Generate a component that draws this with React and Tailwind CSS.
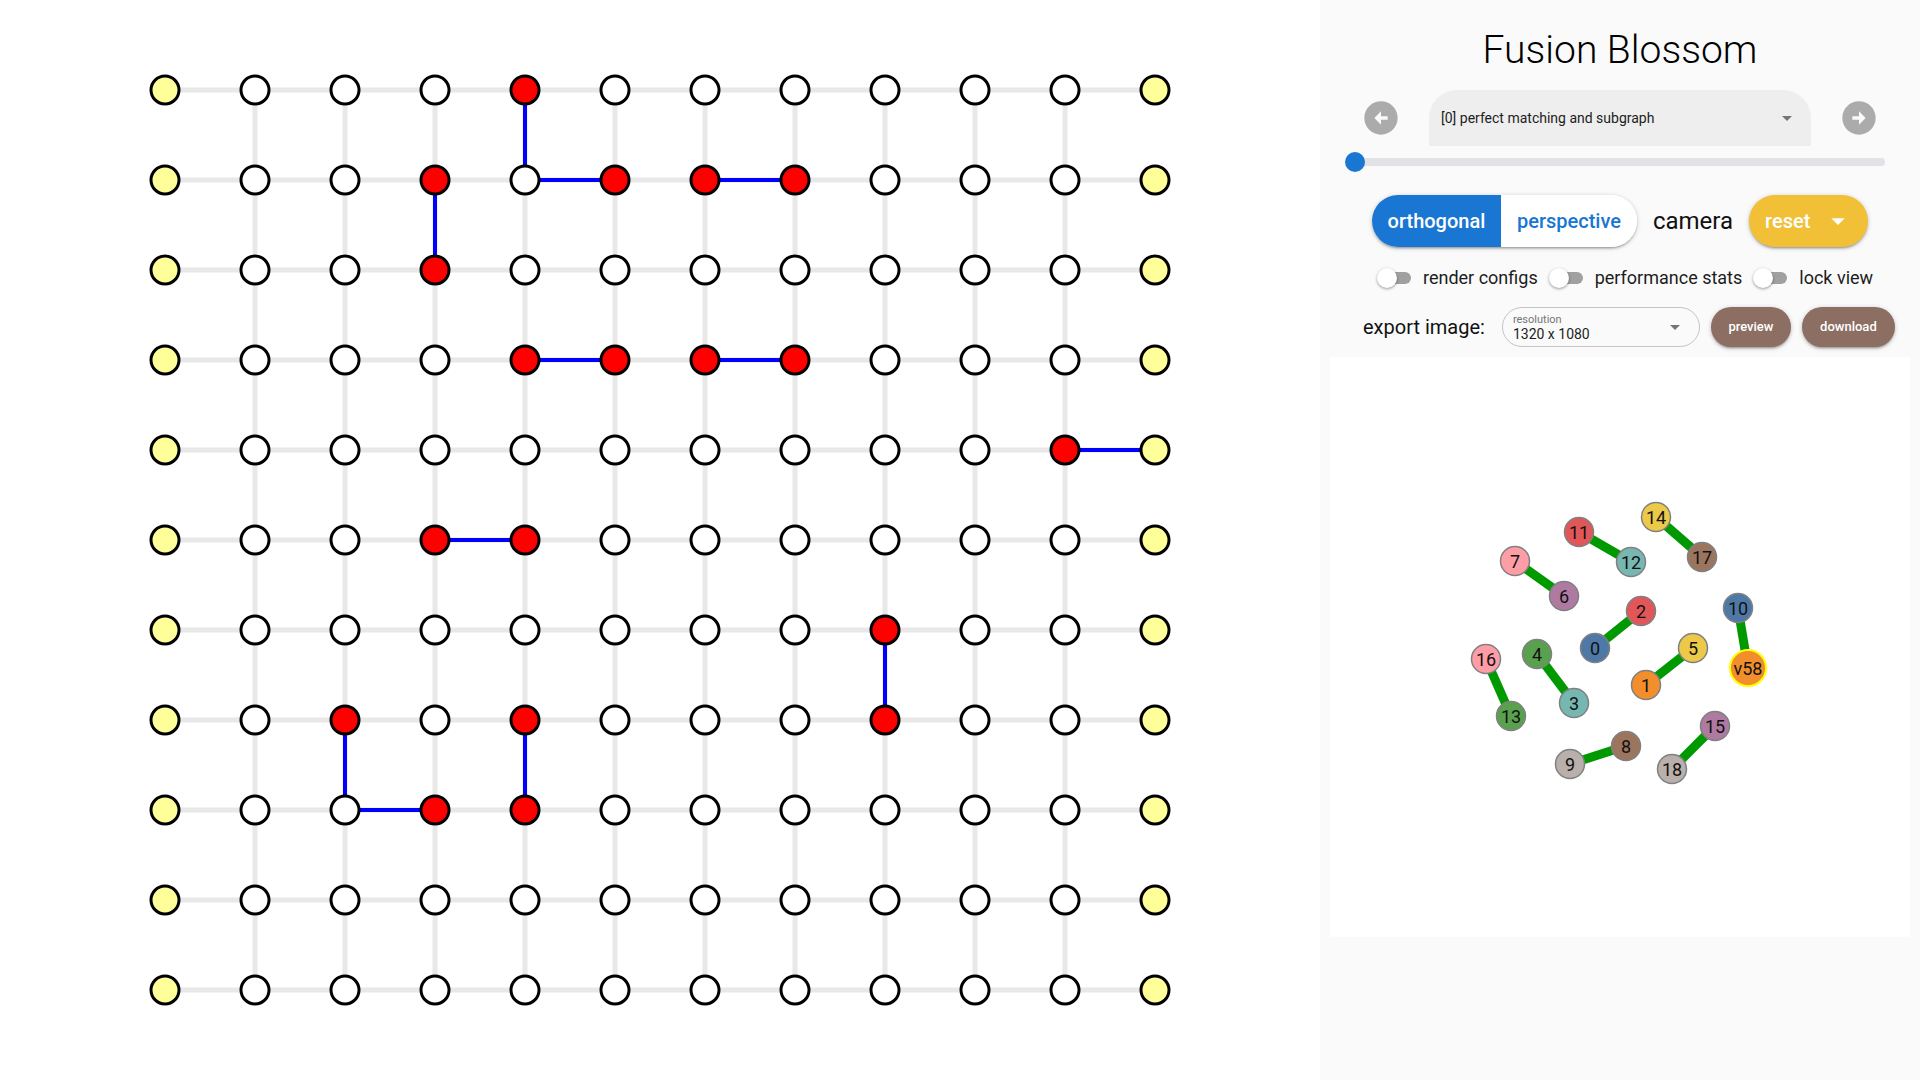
import { useState } from 'react';

const COLS = 12;
const ROWS = 11;
const gx = (i) => 165 + 90 * i;
const gy = (j) => 90 + 90 * j;

const RED = new Set([
  '4,0', '3,1', '5,1', '6,1', '7,1', '3,2', '4,3', '5,3', '6,3', '7,3',
  '10,4', '3,5', '4,5', '8,6', '2,7', '4,7', '8,7', '3,8', '4,8',
]);

const MATCHED = [
  [4, 0, 4, 1], [4, 1, 5, 1], [6, 1, 7, 1], [3, 1, 3, 2], [4, 3, 5, 3],
  [6, 3, 7, 3], [10, 4, 11, 4], [3, 5, 4, 5], [8, 6, 8, 7], [2, 7, 2, 8],
  [2, 8, 3, 8], [4, 7, 4, 8],
];

// subgraph view, coords inside the 580x580 canvas
const NODES = {
  14: [326, 160, '#edc949'],
  11: [249, 175, '#e15759'],
  17: [372, 200, '#9c755f'],
  12: [301, 205, '#76b7b2'],
  7: [185, 204, '#ff9da7'],
  6: [234, 239, '#af7aa1'],
  2: [311, 254, '#e15759'],
  10: [408, 251, '#4e79a7'],
  0: [265, 291, '#4e79a7'],
  5: [363, 291, '#edc949'],
  16: [156, 302, '#ff9da7'],
  4: [207, 297, '#59a14f'],
  v58: [418, 311, '#f28e2c'],
  1: [316, 328, '#f28e2c'],
  3: [244, 346, '#76b7b2'],
  13: [181, 359, '#59a14f'],
  15: [385, 369, '#af7aa1'],
  8: [296, 389, '#9c755f'],
  9: [240, 407, '#bab0ab'],
  18: [342, 412, '#bab0ab'],
};

const PAIRS = [
  ['14', '17'], ['11', '12'], ['7', '6'], ['2', '0'], ['10', 'v58'],
  ['5', '1'], ['16', '13'], ['4', '3'], ['8', '9'], ['15', '18'],
];

const btnShadow =
  'shadow-[0_1px_5px_rgba(0,0,0,0.2),0_2px_2px_rgba(0,0,0,0.14),0_3px_1px_-2px_rgba(0,0,0,0.12)]';

function DecodingGraph() {
  const grayLines = [];
  for (let j = 0; j < ROWS; j++) {
    grayLines.push(<line key={`h${j}`} x1={gx(0)} y1={gy(j)} x2={gx(COLS - 1)} y2={gy(j)} />);
  }
  for (let i = 1; i < COLS - 1; i++) {
    grayLines.push(<line key={`v${i}`} x1={gx(i)} y1={gy(0)} x2={gx(i)} y2={gy(ROWS - 1)} />);
  }

  const nodes = [];
  for (let j = 0; j < ROWS; j++) {
    for (let i = 0; i < COLS; i++) {
      const virtual = i === 0 || i === COLS - 1;
      const fill = virtual ? '#ffff99' : RED.has(`${i},${j}`) ? '#ff0000' : '#ffffff';
      nodes.push(<circle key={`${i}-${j}`} cx={gx(i)} cy={gy(j)} r="14" fill={fill} />);
    }
  }

  return (
    <svg width="1320" height="1080" viewBox="0 0 1320 1080">
      <g stroke="#e8e8e8" strokeWidth="5">{grayLines}</g>
      <g stroke="#0000ff" strokeWidth="4">
        {MATCHED.map(([a, b, c, d], k) => (
          <line key={k} x1={gx(a)} y1={gy(b)} x2={gx(c)} y2={gy(d)} />
        ))}
      </g>
      <g stroke="#000" strokeWidth="3">{nodes}</g>
    </svg>
  );
}

function Subgraph() {
  return (
    <svg width="580" height="580" viewBox="0 0 580 580">
      <g stroke="#009900" strokeWidth="9">
        {PAIRS.map(([a, b]) => (
          <line key={a + b} x1={NODES[a][0]} y1={NODES[a][1]} x2={NODES[b][0]} y2={NODES[b][1]} />
        ))}
      </g>
      {Object.entries(NODES).map(([id, [x, y, c]]) => {
        const big = id === 'v58';
        return (
          <g key={id}>
            <circle
              cx={x}
              cy={y}
              r={big ? 18 : 14.5}
              fill={c}
              stroke={big ? '#ffff00' : '#808080'}
              strokeWidth={big ? 2 : 1.5}
            />
            <text
              x={x}
              y={y + 6.5}
              textAnchor="middle"
              fontSize="18"
              fontFamily="Roboto, sans-serif"
              fill="#111"
            >
              {id}
            </text>
          </g>
        );
      })}
    </svg>
  );
}

function CircleArrow({ dir }) {
  const d =
    dir === 'left'
      ? 'M2 12c0 5.52 4.48 10 10 10s10-4.48 10-10S17.52 2 12 2 2 6.48 2 12zm10-1h4v2h-4v3l-4-4 4-4v3z'
      : 'M22 12c0-5.52-4.48-10-10-10S2 6.48 2 12s4.48 10 10 10 10-4.48 10-10zm-10 1H8v-2h4V8l4 4-4 4v-3z';
  return (
    <button className="w-10 h-10 flex items-center justify-center">
      <svg width="40" height="40" viewBox="0 0 24 24" fill="#ababab">
        <path d={d} />
      </svg>
    </button>
  );
}

function DropArrow({ size = 24, color = '#757575' }) {
  return (
    <svg width={size} height={size} viewBox="0 0 24 24" fill={color}>
      <path d="M7 10l5 5 5-5z" />
    </svg>
  );
}

function Toggle({ label }) {
  const [on, setOn] = useState(false);
  return (
    <button onClick={() => setOn(!on)} className="flex items-center gap-[12px]">
      <span className="relative w-[34px] h-[20px]">
        <span className="absolute left-[3px] right-0 top-[4px] h-[12px] rounded-full bg-[#a0a0a0]" />
        <span
          className={
            'absolute top-0 w-5 h-5 rounded-full bg-white shadow-[0_1px_3px_rgba(0,0,0,0.4)] ' +
            (on ? 'left-[14px]' : 'left-0')
          }
        />
      </span>
      <span className="text-[18px] text-[#1d1d1d] leading-none">{label}</span>
    </button>
  );
}

export default function App() {
  const [mode, setMode] = useState('orthogonal');

  return (
    <div className="flex w-[1920px] h-[1080px] font-['Roboto',sans-serif] overflow-hidden">
      <div className="w-[1320px] h-[1080px] bg-white shrink-0">
        <DecodingGraph />
      </div>

      <div className="w-[600px] h-[1080px] bg-[#fafafa] flex flex-col">
        <h1 className="pt-[31px] h-[69px] text-center text-[39px] leading-[39px] font-light text-black">
          Fusion Blossom
        </h1>

        <div className="mt-[21px] h-[56px] flex items-center justify-center gap-[28px]">
          <CircleArrow dir="left" />
          <div className="w-[382px] h-[56px] rounded-t-[28px] bg-[#eeeeee] flex items-center pl-[12px] pr-[12px]">
            <span className="flex-1 text-[14px] text-[#1d1d1d]">[0] perfect matching and subgraph</span>
            <DropArrow />
          </div>
          <CircleArrow dir="right" />
        </div>

        <div className="relative mt-[6px] h-[20px] mx-[35px]">
          <div className="absolute inset-x-0 top-[6px] h-[8px] rounded-full bg-[#e2e1e6]" />
          <div className="absolute left-[-10px] top-0 w-5 h-5 rounded-full bg-[#1976d2]" />
        </div>

        <div className="mt-[23px] h-[52px] flex items-center justify-center gap-[16px]">
          <div className={`flex h-[52px] rounded-full overflow-hidden bg-white ${btnShadow}`}>
            <button
              onClick={() => setMode('orthogonal')}
              className={
                'w-[129px] text-[20px] font-medium ' +
                (mode === 'orthogonal' ? 'bg-[#1976d2] text-white' : 'bg-white text-[#1976d2]')
              }
            >
              orthogonal
            </button>
            <button
              onClick={() => setMode('perspective')}
              className={
                'w-[136px] text-[20px] font-medium ' +
                (mode === 'perspective' ? 'bg-[#1976d2] text-white' : 'bg-white text-[#1976d2]')
              }
            >
              perspective
            </button>
          </div>
          <span className="text-[24px] text-[#111]">camera</span>
          <button
            className={`w-[119px] h-[52px] rounded-full bg-[#f2c037] text-white text-[20px] font-medium flex items-center pl-[16px] gap-[12px] ${btnShadow}`}
          >
            reset
            <DropArrow size={32} color="#ffffff" />
          </button>
        </div>

        <div className="mt-[21px] h-[20px] flex items-center pl-[57px] gap-[11px]">
          <Toggle label="render configs" />
          <Toggle label="performance stats" />
          <Toggle label="lock view" />
        </div>

        <div className="mt-[19px] h-[40px] flex items-center pl-[43px]">
          <span className="text-[20px] text-[#111] mr-[17px]">export image:</span>
          <div className="w-[198px] h-[40px] rounded-full border border-[#c4c4c4] flex items-center pl-[10px] pr-[12px]">
            <div className="flex-1 flex flex-col leading-none">
              <span className="text-[11px] text-[#757575]">resolution</span>
              <span className="text-[14px] text-[#1d1d1d] mt-[2px]">1320 x 1080</span>
            </div>
            <DropArrow />
          </div>
          <button
            className={`ml-[11px] w-[80px] h-[40px] rounded-full bg-[#8d6e63] text-white text-[13px] font-medium ${btnShadow}`}
          >
            preview
          </button>
          <button
            className={`ml-[11px] w-[93px] h-[40px] rounded-full bg-[#8d6e63] text-white text-[13px] font-medium ${btnShadow}`}
          >
            download
          </button>
        </div>

        <div className="mt-[10px] mx-[10px] h-[580px] bg-white">
          <Subgraph />
        </div>
      </div>
    </div>
  );
}
